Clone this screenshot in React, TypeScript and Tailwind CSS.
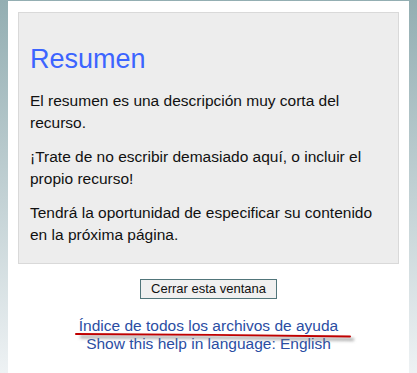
import React from "react";

export default function App() {
  return (
    <div
      className="relative flex h-[373px] w-[417px] bg-gradient-to-b from-[#93aeb2] to-[#eef2f4] px-2 pt-px"
      style={{ fontFamily: '"Liberation Sans", Arial, sans-serif' }}
    >
      <div className="flex flex-1 flex-col bg-white px-[10px] pt-[11px]">
        <div className="border border-[#d9d9d9] bg-[#ededed] px-[11px] pb-[17px] pt-[30px] text-[#111]">
          <h1 className="text-[27px] leading-[32px] text-[#3c64ff]">Resumen</h1>
          <p className="mt-[15px] text-[15.5px] leading-[22px]">
            El resumen es una descripción muy corta del recurso.
          </p>
          <p className="mt-[12px] text-[15.5px] leading-[22px]">
            ¡Trate de no escribir demasiado aquí, o incluir el propio recurso!
          </p>
          <p className="mt-[12px] text-[15.5px] leading-[22px]">
            Tendrá la oportunidad de especificar su contenido en la próxima página.
          </p>
        </div>
        <div className="mt-[15px] flex justify-center">
          <button className="h-[20px] w-[137px] border border-[#51757a] bg-[#f0f0f0] text-[13px] leading-[18px] text-[#111]">
            Cerrar esta ventana
          </button>
        </div>
        <div className="mt-[18px] flex flex-col items-center text-[15.5px] leading-[18px] text-[#2a4da3]">
          <span>Índice de todos los archivos de ayuda</span>
          <span>Show this help in language: English</span>
        </div>
      </div>
      <svg
        className="pointer-events-none absolute left-0 top-0"
        width="417"
        height="373"
        viewBox="0 0 417 373"
      >
        <defs>
          <filter id="sh" x="-10%" y="-200%" width="120%" height="500%">
            <feGaussianBlur stdDeviation="1.5" />
          </filter>
        </defs>
        <path
          d="M80 337 Q 215 337 354 339.5"
          stroke="#777"
          strokeOpacity="0.6"
          strokeWidth="3"
          fill="none"
          filter="url(#sh)"
        />
        <path
          d="M76 334 Q 212 334.5 350 336.5"
          stroke="#c00000"
          strokeWidth="2"
          fill="none"
          strokeLinecap="round"
        />
      </svg>
    </div>
  );
}
